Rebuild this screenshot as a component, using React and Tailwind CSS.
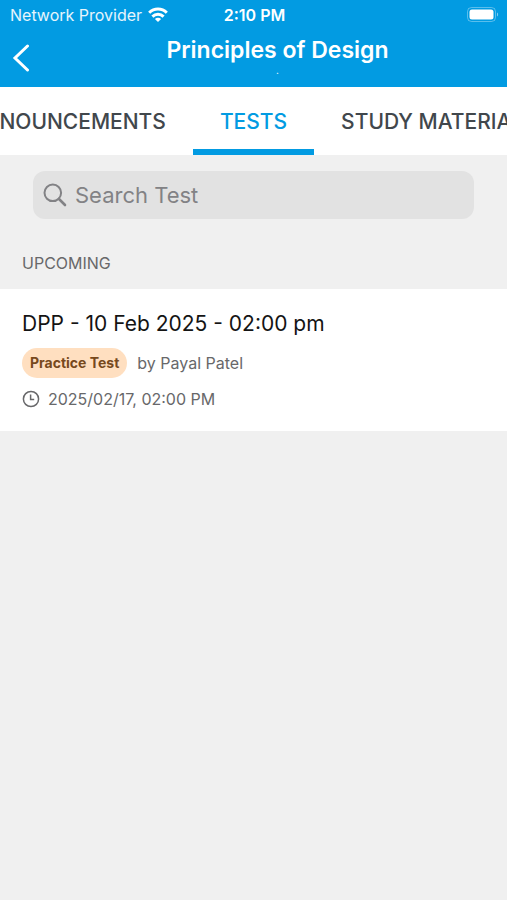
const tabs = [
  { label: "ANNOUNCEMENTS", align: "justify-end" },
  { label: "TESTS", active: true, align: "justify-center" },
  { label: "STUDY MATERIAL", align: "justify-start" },
];

const tests = [
  {
    title: "DPP - 10 Feb 2025 - 02:00 pm",
    type: "Practice Test",
    author: "by Payal Patel",
    date: "2025/02/17, 02:00 PM",
  },
];

function WifiIcon() {
  return (
    <svg className="h-4 w-5" viewBox="0 0 20 16" fill="none" stroke="currentColor" strokeWidth="3">
      <path d="M1.2 5.8C6.2 .8 13.8 .8 18.8 5.8" />
      <path d="M4.4 9.6c3.2-3.1 8-3.1 11.2 0" />
      <path d="M10 15 6.9 11.9c1.8-1.5 4.4-1.5 6.2 0z" fill="currentColor" stroke="none" />
    </svg>
  );
}

function BatteryIcon() {
  return (
    <svg className="h-4 w-8" viewBox="0 0 32 16" fill="none">
      <rect x="0.5" y="0.5" width="28" height="14" rx="4" stroke="#fff" strokeOpacity=".35" />
      <rect x="2.5" y="2.5" width="24" height="10" rx="2.5" fill="#fff" />
      <path d="M30 5.5c1.5.6 1.5 3.4 0 4z" fill="#fff" fillOpacity=".5" />
    </svg>
  );
}

function StatusBar() {
  return (
    <div className="grid h-[30px] grid-cols-[1fr_auto_1fr] items-center pr-2 pl-[10px] text-[16px] leading-5">
      <div className="flex items-center gap-[6px] whitespace-nowrap">
        <span className="text-white/90">Network Provider</span>
        <WifiIcon />
      </div>
      <span className="font-semibold">2:10 PM</span>
      <div className="flex justify-end">
        <BatteryIcon />
      </div>
    </div>
  );
}

function Header() {
  return (
    <header className="bg-[#029be2] pb-[2px] text-white">
      <StatusBar />
      <div className="grid h-[55px] grid-cols-[48px_1fr] items-center">
        <button type="button" aria-label="Back" className="flex h-full items-center pl-3">
          <svg className="h-7 w-5" viewBox="0 0 20 28" fill="none" stroke="currentColor" strokeWidth="3">
            <path d="M15.5 2 3 14l12.5 12" strokeLinecap="round" />
          </svg>
        </button>
        <div className="flex flex-col items-center pb-1">
          <h1 className="text-[23px] leading-7 font-semibold">Principles of Design</h1>
          <span className="text-[10px] leading-3">.</span>
        </div>
      </div>
    </header>
  );
}

function Tabs() {
  return (
    <nav className="grid grid-cols-[1fr_auto_1fr] bg-white">
      {tabs.map(({ label, active, align }) => (
        <div key={label} className={`flex min-w-0 overflow-hidden ${align}`}>
          <button
            type="button"
            aria-current={active ? "page" : undefined}
            className={`h-[68px] shrink-0 border-b-[6px] px-[27px] pt-2 text-[21px] leading-7 font-medium whitespace-nowrap ${
              active ? "border-[#029be2] text-[#029be2]" : "border-transparent text-[#41474c]"
            }`}
          >
            {label}
          </button>
        </div>
      ))}
    </nav>
  );
}

function SearchBar() {
  return (
    <label className="mx-[33px] mt-4 flex h-12 items-center gap-2 rounded-xl bg-[#e2e2e2] px-[10px] text-[#828285]">
      <svg className="size-6 shrink-0" viewBox="0 0 24 24" fill="none" stroke="currentColor" strokeWidth="2">
        <circle cx="9.8" cy="9.8" r="8.3" />
        <path d="m16 16 6 6" strokeWidth="2.6" strokeLinecap="round" />
      </svg>
      <input
        type="text"
        aria-label="Search Test"
        placeholder="Search Test"
        className="min-w-0 flex-1 bg-transparent text-[22px] leading-8 outline-none placeholder:text-[#828285]"
      />
    </label>
  );
}

function TestRow({ test }) {
  return (
    <li className="flex flex-col bg-white px-[22px] pt-[21px] pb-5">
      <h3 className="text-[21px] leading-7 text-[#141414]">{test.title}</h3>
      <div className="mt-[10px] flex items-center gap-[10px]">
        <span className="rounded-full bg-[#ffdfc0] px-2 text-[14px] leading-[30px] font-bold text-[#77491d]">
          {test.type}
        </span>
        <span className="text-[16px] leading-6 text-[#68686a]">{test.author}</span>
      </div>
      <div className="mt-[9px] flex items-center gap-2 text-[16px] leading-6 text-[#68686a]">
        <svg className="size-[18px]" viewBox="0 0 18 18" fill="none" stroke="currentColor" strokeWidth="1.5">
          <circle cx="9" cy="9" r="7.6" />
          <path d="M8.6 4.5v5h3.6" />
        </svg>
        <span>{test.date}</span>
      </div>
    </li>
  );
}

export default function App() {
  return (
    <div className="min-h-screen bg-[#f0f0f0] font-['Inter',sans-serif]">
      <Header />
      <Tabs />
      <main>
        <SearchBar />
        <h2 className="px-[22px] pt-8 pb-[14px] text-[16px] leading-6 text-[#68686a]">UPCOMING</h2>
        <ul>
          {tests.map((test) => (
            <TestRow key={test.title} test={test} />
          ))}
        </ul>
      </main>
    </div>
  );
}
